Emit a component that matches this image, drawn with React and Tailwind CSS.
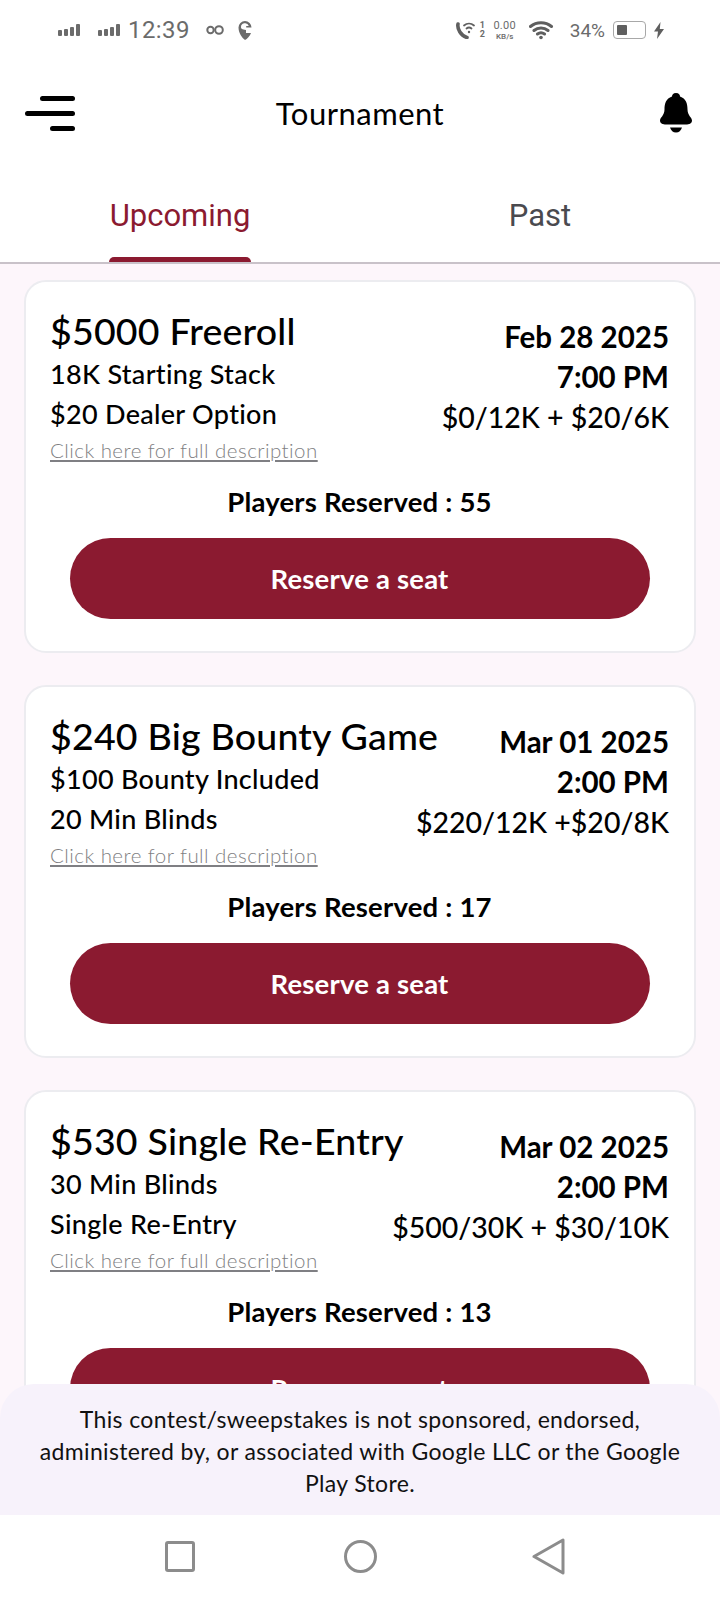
const tournaments = [
  {
    title: '$5000 Freeroll',
    lines: ['18K Starting Stack', '$20 Dealer Option'],
    date: 'Feb 28 2025',
    time: '7:00 PM',
    price: '$0/12K + $20/6K',
    players: 55,
  },
  {
    title: '$240 Big Bounty Game',
    lines: ['$100 Bounty Included', '20 Min Blinds'],
    date: 'Mar 01 2025',
    time: '2:00 PM',
    price: '$220/12K +$20/8K',
    players: 17,
  },
  {
    title: '$530 Single Re-Entry',
    lines: ['30 Min Blinds', 'Single Re-Entry'],
    date: 'Mar 02 2025',
    time: '2:00 PM',
    price: '$500/30K + $30/10K',
    players: 13,
  },
];

function Signal() {
  return (
    <svg width="24" height="12" viewBox="0 0 24 12" fill="#6b6b6b">
      <rect x="0" y="6" width="4" height="6" rx="1" />
      <rect x="6" y="5" width="4" height="7" rx="1" />
      <rect x="12" y="3" width="4" height="9" rx="1" />
      <rect x="18" y="0" width="4" height="12" rx="1" />
    </svg>
  );
}

function StatusBar() {
  return (
    <div className="h-[60px] flex items-center justify-between pl-[58px] pr-[56px] text-[#6b6b6b] font-['Roboto',sans-serif]">
      <div className="flex items-center">
        <Signal />
        <div className="w-4" />
        <Signal />
        <span className="text-[24px] ml-[6px] tracking-[0.4px]">12:39</span>
        <svg className="ml-4" width="18" height="10" viewBox="0 0 18 10" fill="none" stroke="#6b6b6b" strokeWidth="2">
          <circle cx="4.500" cy="5" r="3.200" />
          <circle cx="13" cy="5" r="3.800" />
        </svg>
        <svg className="ml-[14px]" width="14" height="19" viewBox="0 0 14 19" fill="#6b6b6b">
          <path d="M7 0a6.500 6.500 0 0 1 6.500 6.500H8.200V5h2.600A4 4 0 0 0 3 6.500c0 1 1 2 5 2.500v3h5C12 15 9 18 7 19 4 17 .5 12 .5 6.500A6.500 6.500 0 0 1 7 0Z" />
        </svg>
      </div>
      <div className="flex items-center">
        <svg width="24" height="18" viewBox="0 0 24 18" fill="none" stroke="#5f5f5f" strokeLinecap="round">
          <path d="M3 3c-1 5 3 12 9 13.500" strokeWidth="3.600" />
          <path d="M9 4.500c3-2.600 7-2.600 10 0M11.500 7.500c1.600-1.300 3.400-1.300 5 0" strokeWidth="1.800" />
          <circle cx="14" cy="11" r="1.200" fill="#5f5f5f" stroke="none" />
        </svg>
        <div className="flex flex-col text-[9px] leading-[9px] font-bold ml-[1px] w-[5px]">
          <span>1</span>
          <span>2</span>
        </div>
        <div className="flex flex-col items-center ml-[8px] w-[24px]">
          <span className="text-[11px] leading-[12px] tracking-[0.3px]">0.00</span>
          <span className="text-[8px] leading-[9px] font-medium">KB/s</span>
        </div>
        <svg className="ml-[12px]" width="25" height="19" viewBox="0 0 25 19" fill="none" stroke="#5f5f5f" strokeWidth="3" strokeLinecap="round">
          <path d="M1.500 5.500c6-5 15-5 21 0M5 9.500c4-3.300 10-3.300 14 0M8.500 13c2-1.500 5-1.500 7 0" />
          <circle cx="12" cy="16.500" r="1.800" fill="#5f5f5f" stroke="none" />
        </svg>
        <span className="text-[19px] ml-4 mt-[2px]">34%</span>
        <div className="ml-2 w-[33px] h-[18px] rounded-[4px] border border-[#a8a8a8] p-[3px] flex">
          <div className="w-[10px] bg-[#5f5f5f] rounded-[1px]" />
        </div>
        <svg className="ml-[8px]" width="10" height="17" viewBox="0 0 10 17" fill="#5f5f5f">
          <path d="M6.500 0 0 9.500h4L3 17l7-10H5.800Z" />
        </svg>
      </div>
    </div>
  );
}

function Header() {
  return (
    <div className="h-[106px] grid grid-cols-[1fr_auto_1fr] items-center px-[25px]">
      <svg width="50" height="35" viewBox="0 0 50 35">
        <g stroke="#000" strokeWidth="5" strokeLinecap="round">
          <path d="M17.500 2.500h30" />
          <path d="M2.500 17.500h45" />
          <path d="M27.500 32.500h20" />
        </g>
      </svg>
      <h1 className="text-[31px] text-black font-['Lato',sans-serif] tracking-[0.5px]">Tournament</h1>
      <svg className="justify-self-end mr-[3px]" width="32" height="40" viewBox="0 0 32 40" fill="#000">
        <path d="M16 0c3 0 4 2 4 3.500 6 2 7.500 7 7.500 13 0 6 4.500 8 4.500 11 0 3-3 4-6 4H6c-3 0-6-1-6-4 0-3 4.500-5 4.500-11 0-6 1.500-11 7.500-13C12 2 13 0 16 0Z" />
        <path d="M10 34.500h12c-1 3-3 5-6 5s-5-2-6-5Z" />
      </svg>
    </div>
  );
}

function Tabs() {
  return (
    <div className="grid grid-cols-2 h-[98px] border-b-2 border-[#c9c2c9] font-['Roboto',sans-serif] text-[31px]">
      <div className="flex flex-col items-center justify-end">
        <span className="text-[#8b1a30] mb-[21px] leading-[40px]">Upcoming</span>
        <div className="w-[142px] h-[5px] bg-[#8b1a30] rounded-t-[5px]" />
      </div>
      <div className="flex flex-col items-center justify-end">
        <span className="text-[#4a4a4f] mb-[26px] leading-[40px]">Past</span>
      </div>
    </div>
  );
}

function Card({ t }) {
  return (
    <div className="bg-white rounded-[22px] border-2 border-[#ececf0] h-[373px] pt-[25px] pl-[24px] pr-[25px] font-['Lato',sans-serif] text-black shrink-0">
      <div className="flex justify-between">
        {/* title is allowed to run past this column, right column stays put */}
        <div className="w-[250px] shrink-0 whitespace-nowrap">
          <div className="text-[37.500px] leading-[47px] font-medium tracking-[0.2px]">{t.title}</div>
          <div className="text-[27px] leading-[40px] font-medium tracking-[0.3px]">{t.lines[0]}</div>
          <div className="text-[27px] leading-[40px] font-medium tracking-[0.3px]">{t.lines[1]}</div>
          <div className="text-[20.500px] leading-[30px] text-[#7f7f83] underline mt-[1px] tracking-[0.45px] font-light">Click here for full description</div>
        </div>
        <div className="text-right pt-[10px] whitespace-nowrap">
          <div className="text-[29.500px] leading-[40px] font-bold">{t.date}</div>
          <div className="text-[29.500px] leading-[40px] font-bold">{t.time}</div>
          <div className="text-[28.500px] leading-[41px] font-medium">{t.price}</div>
        </div>
      </div>
      <div className="text-center text-[27.500px] leading-[36px] font-bold mt-[19px] tracking-[0.2px]">Players Reserved : {t.players}</div>
      <button className="block mx-auto mt-[18px] w-[580px] h-[81px] rounded-full bg-[#8b1a30] text-white text-[27.500px] font-bold tracking-[0.2px]">Reserve a seat</button>
    </div>
  );
}

function NavBar() {
  return (
    <div className="h-[85px] bg-white flex items-center pl-[165px] pb-[3px]">
      <div className="w-[30px] h-[31px] border-[3px] border-[#8c8c8c] rounded-[3px]" />
      <div className="w-[33px] h-[33px] ml-[149px] border-[3px] border-[#8c8c8c] rounded-full" />
      <svg className="ml-[155px]" width="33" height="37" viewBox="0 0 33 37" fill="none" stroke="#8c8c8c" strokeWidth="3" strokeLinejoin="round">
        <path d="M31 2v33L2 18.500Z" />
      </svg>
    </div>
  );
}

export default function App() {
  return (
    <div className="relative w-[720px] h-[1600px] bg-white flex flex-col overflow-hidden">
      <StatusBar />
      <Header />
      <Tabs />
      <main className="flex-1 min-h-0 overflow-hidden bg-[#fdf6fb] px-[24px] pt-[16px] flex flex-col gap-[32px]">
        {tournaments.map((t) => (
          <Card key={t.title} t={t} />
        ))}
      </main>
      {/* Disclaimer sheet over the last card */}
      <div className="absolute left-0 right-0 bottom-[85px] h-[131px] bg-[#f7f2fb] rounded-t-[34px] flex items-center justify-center text-center pt-[3px] px-[30px] font-['Lato',sans-serif] text-[23px] leading-[32px] text-[#111] tracking-[0.35px]">
        This contest/sweepstakes is not sponsored, endorsed, administered by, or associated with Google LLC or the Google Play Store.
      </div>
      <NavBar />
    </div>
  );
}
